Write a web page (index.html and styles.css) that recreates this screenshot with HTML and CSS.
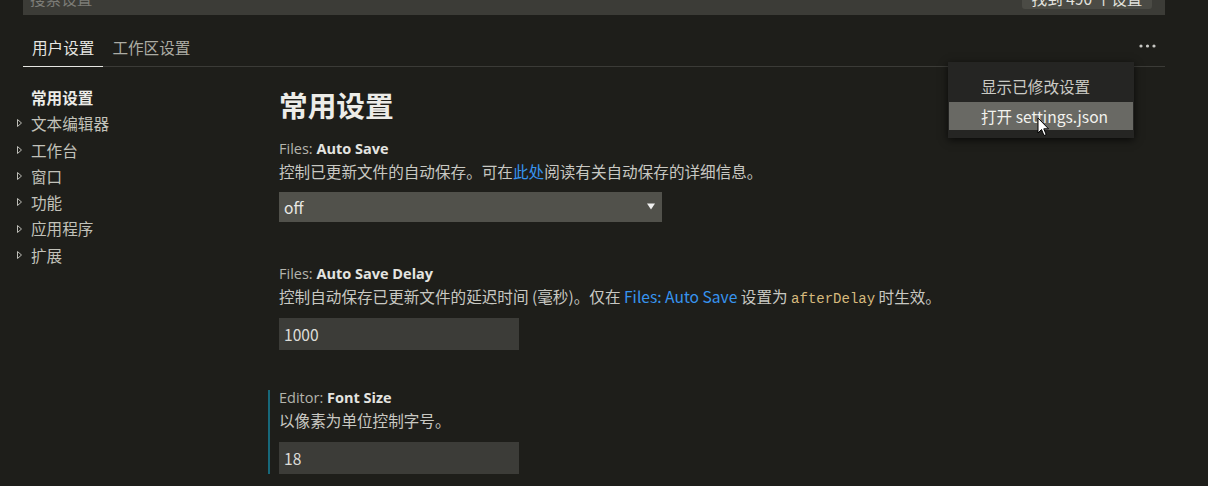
FILE: index.html
```html
<!DOCTYPE html>
<html lang="zh-CN">
<head>
<meta charset="utf-8">
<title>设置</title>
<link rel="stylesheet" href="styles.css">
</head>
<body>
<div class="search">
  <div class="search-inner">
    <span class="search-ph">搜索设置</span>
    <span class="count">找到 490 个设置</span>
  </div>
</div>
<div class="tabs">
  <div class="tab active">用户设置</div>
  <div class="tab">工作区设置</div>
  <svg class="more" width="17" height="6" viewBox="0 0 17 6"><circle cx="2" cy="3" r="1.6" fill="#c8c8c4"/><circle cx="8.5" cy="3" r="1.6" fill="#c8c8c4"/><circle cx="15" cy="3" r="1.6" fill="#c8c8c4"/></svg>
</div>
<div class="main">
  <nav class="toc">
    <div class="toc-item toc-top">常用设置</div>
    <div class="toc-item"><svg class="tri" width="5" height="8" viewBox="0 0 5 8"><path d="M0.5 0.5 L4.5 4 L0.5 7.5 Z" fill="none" stroke="#bdbdb7" stroke-width="1"/></svg>文本编辑器</div>
    <div class="toc-item"><svg class="tri" width="5" height="8" viewBox="0 0 5 8"><path d="M0.5 0.5 L4.5 4 L0.5 7.5 Z" fill="none" stroke="#bdbdb7" stroke-width="1"/></svg>工作台</div>
    <div class="toc-item"><svg class="tri" width="5" height="8" viewBox="0 0 5 8"><path d="M0.5 0.5 L4.5 4 L0.5 7.5 Z" fill="none" stroke="#bdbdb7" stroke-width="1"/></svg>窗口</div>
    <div class="toc-item"><svg class="tri" width="5" height="8" viewBox="0 0 5 8"><path d="M0.5 0.5 L4.5 4 L0.5 7.5 Z" fill="none" stroke="#bdbdb7" stroke-width="1"/></svg>功能</div>
    <div class="toc-item"><svg class="tri" width="5" height="8" viewBox="0 0 5 8"><path d="M0.5 0.5 L4.5 4 L0.5 7.5 Z" fill="none" stroke="#bdbdb7" stroke-width="1"/></svg>应用程序</div>
    <div class="toc-item"><svg class="tri" width="5" height="8" viewBox="0 0 5 8"><path d="M0.5 0.5 L4.5 4 L0.5 7.5 Z" fill="none" stroke="#bdbdb7" stroke-width="1"/></svg>扩展</div>
  </nav>
  <section class="content">
    <h1 class="heading">常用设置</h1>
    <div class="setting first">
      <div class="stitle"><span class="cat">Files: </span><b>Auto Save</b></div>
      <div class="desc">控制已更新文件的自动保存。可在<span class="link">此处</span>阅读有关自动保存的详细信息。</div>
      <div class="select"><span>off</span><svg width="8" height="7" viewBox="0 0 8 7"><path d="M0 0.5 L8 0.5 L4 6.5 Z" fill="#f0f0f0"/></svg></div>
    </div>
    <div class="setting">
      <div class="stitle"><span class="cat">Files: </span><b>Auto Save Delay</b></div>
      <div class="desc">控制自动保存已更新文件的延迟时间 (毫秒)。仅在 <span class="link">Files: Auto Save</span> 设置为 <code>afterDelay</code> 时生效。</div>
      <div class="input">1000</div>
    </div>
    <div class="setting focused">
      <div class="stitle"><span class="cat">Editor: </span><b>Font Size</b></div>
      <div class="desc">以像素为单位控制字号。</div>
      <div class="input">18</div>
    </div>
  </section>
</div>
<div class="menu">
  <div class="menu-item">显示已修改设置</div>
  <div class="menu-item hover">打开 settings.json</div>
</div>
<svg class="cursor" width="13" height="20" viewBox="0 0 13 20"><path d="M1 1 L1 16 L4.5 12.5 L7 18.5 L9.2 17.6 L6.8 11.8 L11.5 11.8 Z" fill="#ffffff" stroke="#000000" stroke-width="1" stroke-linejoin="round"/></svg>
</body>
</html>
```
FILE: styles.css
```css
html, body {
  margin: 0;
  padding: 0;
}
body {
  width: 1208px;
  height: 486px;
  overflow: hidden;
  background: #1e1e1a;
  color: #c8c8c2;
  font-family: "Noto Sans CJK SC", "Noto Sans", sans-serif;
  font-size: 15.6px;
  position: relative;
}
.search {
  margin-left: 23px;
  width: 1142px;
  height: 15px;
  background: #3c3c37;
  overflow: hidden;
}
.search-inner {
  margin-top: -15px;
  height: 26px;
  display: flex;
  align-items: center;
  justify-content: space-between;
  padding: 0 13px 0 7px;
}
.search-ph {
  color: #7d7d77;
  white-space: nowrap;
}
.count {
  background: #4b4b45;
  color: #e2e2de;
  border-radius: 3px;
  height: 22px;
  line-height: 22px;
  width: 130px;
  text-align: center;
  white-space: nowrap;
  box-sizing: border-box;
}
.tabs {
  margin-left: 23px;
  width: 1142px;
  height: 51px;
  border-bottom: 1px solid #3b3b37;
  display: flex;
  align-items: flex-start;
}
.tab {
  height: 52px;
  box-sizing: border-box;
  padding: 21px 9px 0;
  line-height: 22px;
  color: #acaca4;
  margin-bottom: -1px;
}
.tab.active {
  color: #e6e6e2;
  border-bottom: 1px solid #e6e6e2;
}
.more {
  margin-left: auto;
  margin-right: 9px;
  margin-top: 28px;
}
.main {
  display: flex;
}
.toc {
  width: 268px;
  flex: none;
  padding-top: 17px;
}
.toc-item {
  height: 26.3px;
  line-height: 26.3px;
  display: flex;
  align-items: center;
  padding-left: 17px;
  color: #c2c2ba;
}
.toc-top {
  padding-left: 31px;
  font-weight: 700;
  color: #ececE8;
}
.tri {
  margin-right: 9px;
  flex: none;
}
.content {
  padding-top: 20px;
}
.heading {
  margin: 0 0 18px 11px;
  font-size: 28.7px;
  line-height: 36px;
  font-weight: 700;
  color: #ececE8;
}
.setting {
  border-left: 2px solid transparent;
  padding-left: 9px;
  margin-bottom: 40px;
}
.setting.first {
  margin-bottom: 44px;
}
.setting.focused {
  border-left-color: #17687a;
}
.stitle {
  font-family: "Open Sans", "Noto Sans CJK SC", sans-serif;
  font-size: 14.5px;
  line-height: 16px;
  height: 16px;
  color: #e4e4e0;
}
.stitle .cat {
  color: #b4b4ac;
}
.stitle b {
  font-weight: 700;
}
.desc {
  margin-top: 3px;
  height: 22px;
  line-height: 22px;
  color: #c8c8c2;
  white-space: nowrap;
}
.link {
  color: #3794ef;
}
code {
  font-family: "Liberation Mono", "DejaVu Sans Mono", monospace;
  font-size: 14px;
  line-height: 1;
  color: #d7ba7d;
}
.select {
  margin-top: 10px;
  width: 383px;
  height: 30px;
  background: #51514b;
  color: #e8e8e4;
  display: flex;
  align-items: center;
  justify-content: space-between;
  padding: 0 7px 0 5px;
  box-sizing: border-box;
}
.select svg {
  margin-top: -2px;
}
.input {
  margin-top: 11px;
  width: 240px;
  height: 32px;
  background: #3c3c38;
  color: #dcdcd8;
  line-height: 32px;
  padding-left: 5px;
  box-sizing: border-box;
}
.menu {
  position: absolute;
  left: 948px;
  top: 62px;
  width: 186px;
  box-sizing: border-box;
  padding: 10px 1px 8px;
  background: #252523;
  box-shadow: 0 2px 8px rgba(0, 0, 0, 0.7);
}
.menu-item {
  height: 28px;
  line-height: 28px;
  padding-left: 32px;
  color: #cacac4;
  white-space: nowrap;
}
.menu-item:first-child {
  margin-bottom: 2px;
}
.menu-item.hover {
  background: #696964;
  color: #f2f2ee;
}
.cursor {
  position: absolute;
  left: 1037px;
  top: 117px;
}
```
